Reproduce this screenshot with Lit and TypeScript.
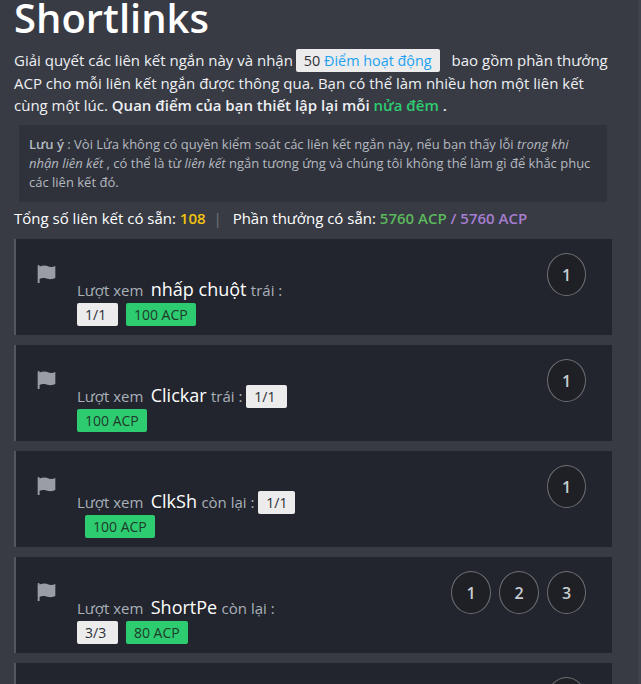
import { LitElement, html, css } from "lit";
import { customElement } from "lit/decorators.js";

interface Row { name: string; left: string; count: string; acp: string; shift?: boolean; nums: number[] }
const rows: Row[] = [
  { name: "nhấp chuột", left: "trái", count: "1/1", acp: "100 ACP", nums: [1] },
  { name: "Clickar", left: "trái", count: "1/1", acp: "100 ACP", nums: [1] },
  { name: "ClkSh", left: "còn lại", count: "1/1", acp: "100 ACP", shift: true, nums: [1] },
  { name: "ShortPe", left: "còn lại", count: "3/3", acp: "80 ACP", nums: [1, 2, 3] },
  { name: "Shortlink", left: "trái", count: "1/1", acp: "100 ACP", nums: [1] },
];

@customElement("app-root")
export class AppRoot extends LitElement {
  static styles = css`
    :host { display: block; position: relative; height: 684px; overflow: hidden; background: #383b44; font-family: "Open Sans", sans-serif; color: #eef0f3; font-size: 15px; line-height: 1.5; }
    :host::after { content: ""; position: absolute; top: 0; right: 0; bottom: 0; width: 3px; background: #3f424b; }
    .page { padding: 0 29px 0 14px; }
    h1 { margin: -2px 0 0; font-size: 40px; font-weight: 600; line-height: 40px; color: #fff; padding-bottom: 11px; }
    .intro { margin: 0 0 9px; line-height: 22px; font-size: 15px; width: 600px; }
    .pill { display: inline-block; background: #ececec; color: #2b2e36; padding: 0 8px; border-radius: 2px; line-height: 23px; margin: 0 8px 0 -1px; font-size: 14.4px; }
    .pill span { color: #1da1f2; }
    .b { font-weight: 600; }
    .g { color: #2ecc71; font-weight: 600; }
    .note { margin: 0 5px; background: #2f323a; padding: 10px; font-size: 13px; line-height: 19px; color: #b4b9c0; width: 568px; }
    .note b { font-weight: 600; }
    .stats { margin: 5px 0 10px; line-height: 22px; color: #fff; font-size: 15px; }
    .y { color: #f1c40f; font-weight: 600; }
    .sep { color: #6c757d; margin: 0 7px 0 4px; }
    .g2 { color: #5cb85c; font-weight: 600; }
    .p { color: #a67ed0; font-weight: 600; }
    .card { display: flex; justify-content: space-between; height: 96px; box-sizing: border-box; margin-bottom: 10px; width: 598px; background: #22252d; border-left: 2px solid #54575e; padding: 14px 26px 0 21px; }
    .flag { width: 19px; height: 18px; margin-top: 12px; flex: none; }
    .flag path { fill: #9a9da3; }
    .body { flex: none; width: 225px; margin-left: 21px; padding-top: 24px; color: #a9b1ba; font-size: 15px; line-height: 24px; }
    .name { color: #fff; font-size: 18px; margin: 0 0.5px 0 3.5px; }
    .tag { display: inline-block; height: 23px; line-height: 23px; border-radius: 2px; font-size: 14px; box-sizing: border-box; padding-left: 8px; }
    .count { background: #ececec; color: #2b2e36; width: 41px; margin: 0 4px 0 0; }
    .count.tight { width: 37px; }
    .acp { background: #2ecc71; color: #1f3a2a; padding: 0 8px; }
    .shift { margin-left: 8px; }
    .nums { display: flex; gap: 8px; margin-left: auto; }
    .num { width: 40px; height: 43px; box-sizing: border-box; border: 1px solid #6c6f74; border-radius: 50%; background: #1e2025; color: #c8ccd0; display: flex; align-items: center; justify-content: center; font-size: 16px; font-weight: 600; }
    .num:last-child { width: 39px; }
  `;

  render() {
    return html`<div class="page">
      <h1>Shortlinks</h1>
      <p class="intro">Giải quyết các liên kết ngắn này và nhận <span class="pill">50 <span>Điểm hoạt động</span></span> bao gồm phần thưởng ACP cho mỗi liên kết ngắn được thông qua. Bạn có thể làm nhiều hơn một liên kết cùng một lúc. <span class="b">Quan điểm của bạn thiết lập lại mỗi <span class="g">nửa đêm</span> .</span></p>
      <div class="note"><b>Lưu ý</b> : Vòi Lửa không có quyền kiểm soát các liên kết ngắn này, nếu bạn thấy lỗi <i>trong khi nhận liên kết</i> , có thể là từ <i>liên kết</i> ngắn tương ứng và chúng tôi không thể làm gì để khắc phục các liên kết đó.</div>
      <div class="stats">Tổng số liên kết có sẵn: <span class="y">108</span> <span class="sep">|</span> Phần thưởng có sẵn: <span class="g2">5760 ACP</span> <span class="p">/ 5760 ACP</span></div>
      ${rows.map((r) => html`<div class="card">
        <svg class="flag" viewBox="40 32 440 448"><path d="M64 32c13 0 24 11 24 24v16c42-20 82-28 128-28 64 0 96 36 160 36 38 0 72-10 104-24v296c-32 24-72 36-120 36-64 0-96-32-160-32-44 0-84 10-112 24v116c0 13-11 24-24 24s-24-11-24-24V56c0-13 11-24 24-24z"/></svg>
        <div class="body">Lượt xem <span class="name">${r.name}</span> ${r.left} : <span class="tag count ${r.shift ? "tight" : ""}">${r.count}</span> <span class="tag acp ${r.shift ? "shift" : ""}">${r.acp}</span></div>
        <div class="nums">${r.nums.map((n) => html`<div class="num">${n}</div>`)}</div>
      </div>`)}
    </div>`;
  }
}
